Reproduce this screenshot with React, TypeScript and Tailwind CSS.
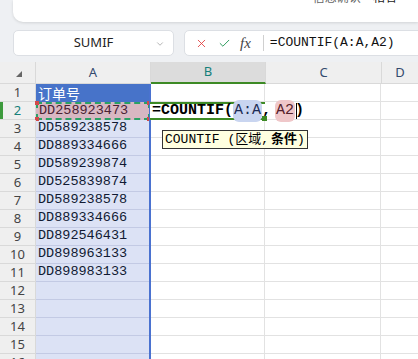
import { Check, ChevronDown, X } from 'lucide-react';

const ids = [
  'DD589238578',
  'DD889334666',
  'DD589239874',
  'DD525839874',
  'DD589238578',
  'DD889334666',
  'DD892546431',
  'DD898963133',
  'DD898983133',
];

const mono = { fontFamily: '"Liberation Mono", "Noto Sans CJK SC", monospace' };
const ui = { fontFamily: '"Noto Sans", "Noto Sans CJK SC", sans-serif' };

function RowHead({ n, active }: { n: number; active?: boolean }) {
  return (
    <div
      className={`relative flex h-full w-[36px] shrink-0 items-center justify-center border-b border-r border-[#d9d9d9] bg-[#efefef] text-[13px] ${
        active ? 'text-[#16807a]' : 'text-[#444]'
      }`}
      style={ui}
    >
      {active && <span className="absolute left-0 top-0 h-full w-[3px] bg-[#3d9a3d]" />}
      {n}
    </div>
  );
}

function Rest() {
  return (
    <>
      <div className="h-full w-[115px] shrink-0 border-b border-r border-[#e2e2e2] bg-white" />
      <div className="h-full w-[116px] shrink-0 border-b border-r border-[#e2e2e2] bg-white" />
      <div className="h-full flex-1 border-b border-[#e2e2e2] bg-white" />
    </>
  );
}

export default function App() {
  return (
    <div className="relative h-[359px] w-[418px] overflow-hidden bg-[#eef0f3]" style={ui}>
      {/* top panel */}
      <div className="pl-[13px]">
        <div className="relative h-[22px] overflow-hidden rounded-bl-[10px] bg-white shadow-[0_1px_3px_rgba(0,0,0,0.12)]">
          <div className="absolute right-[6px] top-[-11px] flex gap-3 text-[12px] text-[#666]">
            <span>信息确认</span>
            <span className="text-[#222]">相名</span>
            <span className="text-[#bbb]">·</span>
          </div>
        </div>
      </div>

      {/* formula row */}
      <div className="mt-[8px] flex h-[26px] gap-[10px] pl-[13px]">
        <div className="relative flex w-[161px] items-center justify-center rounded-[5px] border border-[#dcdfe4] bg-white text-[13px] text-[#222]">
          SUMIF
          <ChevronDown className="absolute right-[8px] top-[8px] h-[10px] w-[10px] text-[#888]" strokeWidth={1.5} />
        </div>
        <div className="-mr-[10px] flex flex-1 items-center rounded-l-[5px] border border-[#dcdfe4] bg-white pl-[10px]">
          <X className="h-[13px] w-[13px] text-[#e23b3b]" strokeWidth={1.6} />
          <Check className="ml-[10px] h-[13px] w-[13px] text-[#2a9a5c]" strokeWidth={1.8} />
          <span
            className="ml-[9px] text-[15px] italic text-[#444]"
            style={{ fontFamily: '"Liberation Serif", serif' }}
          >
            fx
          </span>
          <span className="ml-[12px] h-[16px] w-px bg-[#d0d0d0]" />
          <span className="ml-[6px] text-[13px] text-[#111]" style={mono}>
            =COUNTIF(A:A,A2)
          </span>
        </div>
      </div>

      {/* grid */}
      <div className="mt-[6px]">
        {/* column header */}
        <div className="flex h-[22px] text-[13px]">
          <div className="relative w-[36px] shrink-0 border-b border-r border-[#d9d9d9] bg-[#efefef]">
            <span className="absolute left-[16px] top-[9px] h-0 w-0 border-b-[6px] border-l-[6px] border-b-[#666] border-l-transparent" />
          </div>
          <div className="flex w-[115px] shrink-0 items-center justify-center border-b border-r border-[#d9d9d9] bg-[#efefef] text-[#334a6e]">
            A
          </div>
          <div className="flex w-[115px] shrink-0 items-center justify-center border-b-2 border-r border-b-[#3d8a25] border-r-[#d9d9d9] bg-[#dcdcdc] text-[#16807a]">
            B
          </div>
          <div className="flex w-[116px] shrink-0 items-center justify-center border-b border-r border-[#d9d9d9] bg-[#efefef] text-[#334a6e]">
            C
          </div>
          <div className="flex flex-1 items-center justify-center border-b border-[#d9d9d9] bg-[#efefef] text-[#334a6e]">
            D
          </div>
        </div>

        <div className="relative">
          {/* selection right edge of column A */}
          <div className="absolute left-[149px] top-0 z-10 h-[300px] w-[2px] bg-[#4a72d0]" />

          {/* row 1 */}
          <div className="flex h-[18px]">
            <RowHead n={1} />
            <div
              className="flex h-full w-[114px] shrink-0 items-center bg-[#4773c9] pl-[2px] text-[14px] text-white"
              style={ui}
            >
              订单号
            </div>
            <Rest />
          </div>

          {/* row 2 */}
          <div className="relative flex h-[18px]">
            <RowHead n={2} active />
            <div className="relative flex h-full w-[114px] shrink-0 items-center border-2 border-dashed border-[#2aa166] bg-[#d8b7c2] pl-px text-[13.5px] text-[#4a2233]" style={mono}>
              DD258923473
              <span className="absolute -left-[3px] -top-[3px] h-[4px] w-[4px] bg-[#d24a4a]" />
              <span className="absolute -right-[3px] -top-[3px] h-[4px] w-[4px] bg-[#d24a4a]" />
              <span className="absolute -bottom-[3px] -left-[3px] h-[4px] w-[4px] bg-[#d24a4a]" />
              <span className="absolute -bottom-[3px] -right-[3px] h-[4px] w-[4px] bg-[#d24a4a]" />
            </div>
            <div className="relative z-20 flex h-full w-[115px] shrink-0 items-center border-y-2 border-[#3d8a25] bg-white pl-[2px]">
              <span className="flex items-center whitespace-nowrap text-[15px] text-black" style={mono}>
                <span className="font-bold">=COUNTIF(</span>
                <span className="rounded-[6px] bg-[#c9d5f0] px-[1px] text-[#1c2b55]">A:A</span>
                <span className="font-bold">,</span>
                <span className="ml-[4px] rounded-[6px] bg-[#efc7c9] px-[1px] text-[#55202a]">A2</span>
                <span className="font-bold">)</span>
                <span className="-ml-[8px] h-[16px] w-px bg-black" />
              </span>
              <span className="absolute -bottom-[3px] -right-[2px] h-[5px] w-[5px] bg-[#3d8a25]" />
            </div>
            <div className="h-full w-[116px] shrink-0 border-b border-r border-[#e2e2e2] bg-white" />
            <div className="h-full flex-1 border-b border-[#e2e2e2] bg-white" />
          </div>

          {/* tooltip */}
          <div
            className="absolute left-[162px] top-[46px] z-30 flex h-[19px] items-center whitespace-nowrap border border-[#333] bg-[#ffffe0] px-[2px] text-[13px] text-black"
            style={mono}
          >
            COUNTIF (区域, <b className="ml-[2px]">条件</b>)
          </div>

          {ids.map((id, i) => (
            <div key={i} className="flex h-[18px]">
              <RowHead n={i + 3} />
              <div
                className="flex h-full w-[114px] shrink-0 items-center border-b border-[#c3cae4] bg-[#dce2f5] pl-[2px] text-[13.5px] text-[#111a33]"
                style={mono}
              >
                {id}
              </div>
              <Rest />
            </div>
          ))}

          {[12, 13, 14, 15, 16].map((n) => (
            <div key={n} className="flex h-[18px]">
              <RowHead n={n} />
              <div className="h-full w-[114px] shrink-0 border-b border-[#c3cae4] bg-[#dce2f5]" />
              <Rest />
            </div>
          ))}
        </div>
      </div>
    </div>
  );
}
